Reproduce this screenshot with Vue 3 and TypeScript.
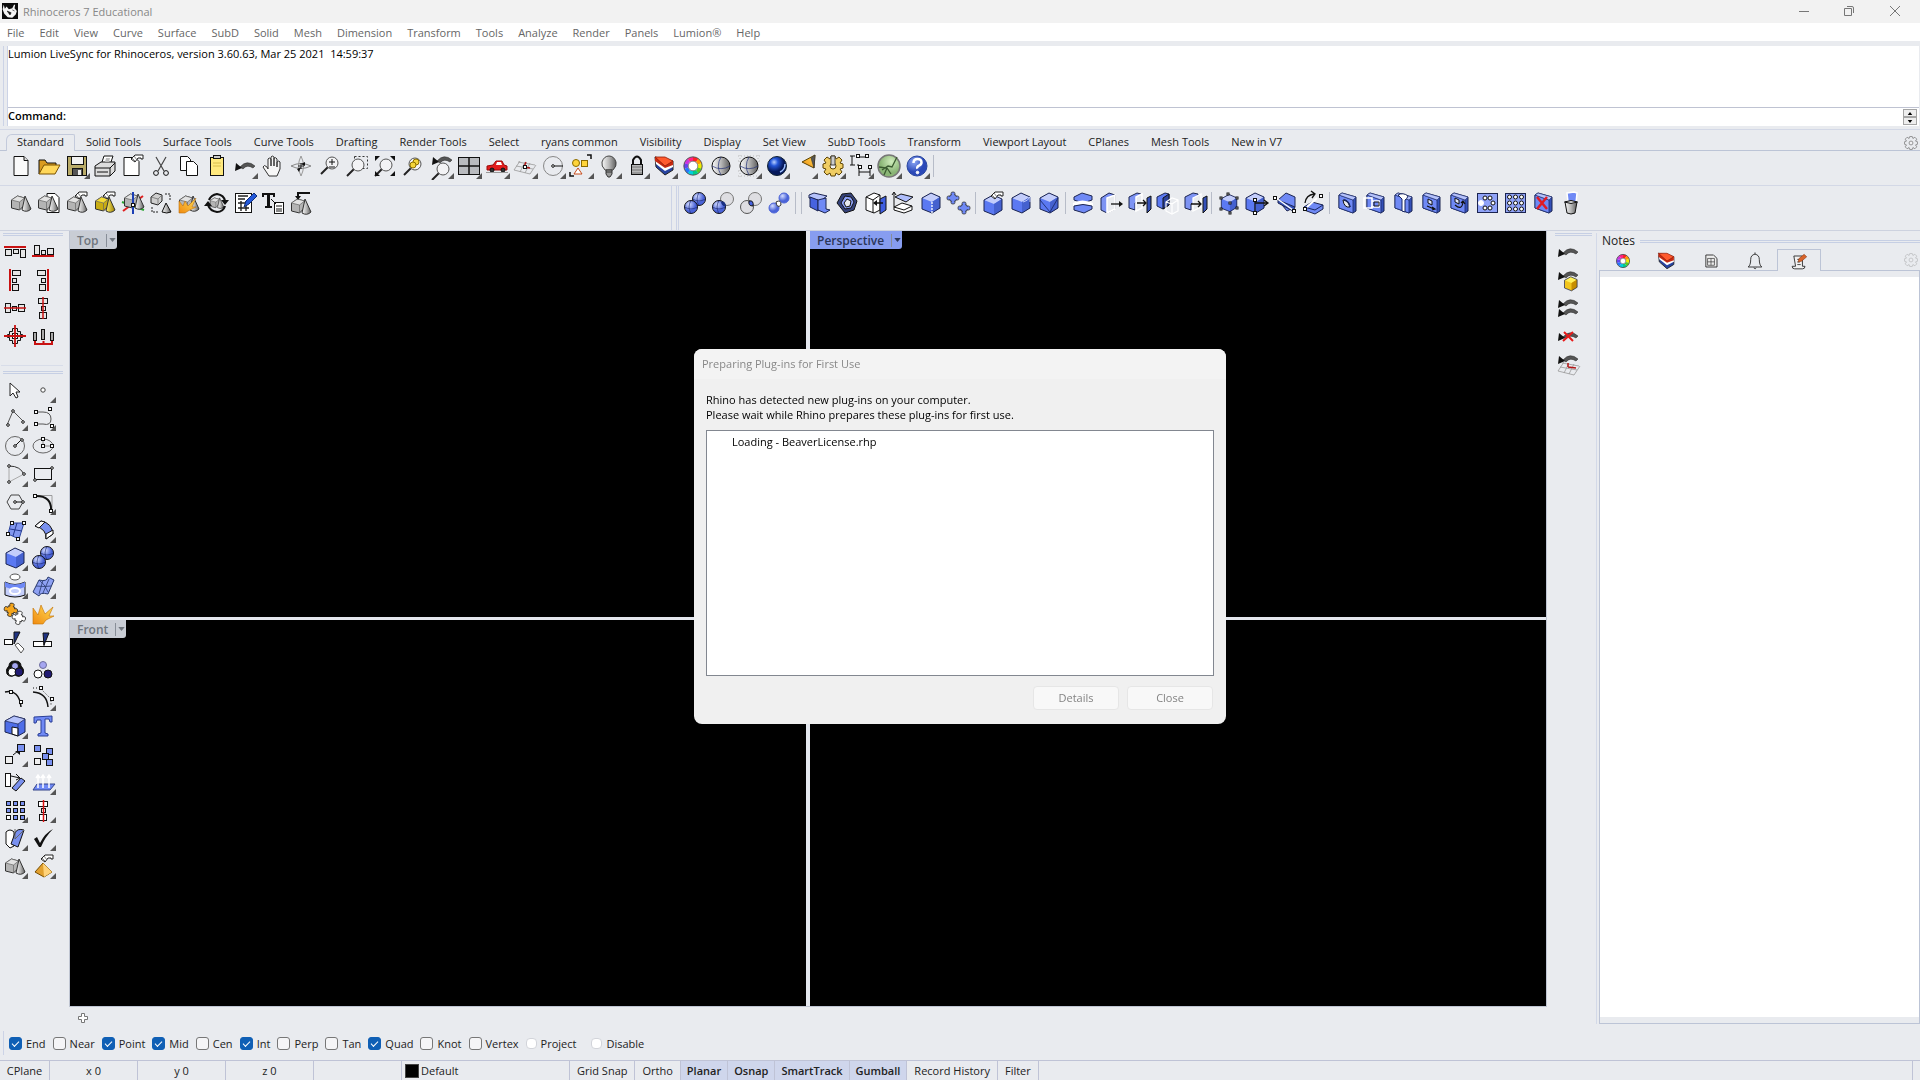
<script setup lang="ts">
import { ref } from 'vue'

const path = (d: string, fill = 'none', stroke = '#111', w = 1) =>
  `<path d="${d}" fill="${fill}" stroke="${stroke}" stroke-width="${w}"/>`
const rect = (x: number, y: number, w: number, h: number, fill = '#fff', stroke = '#111') =>
  `<rect x="${x + 0.5}" y="${y + 0.5}" width="${w - 1}" height="${h - 1}" fill="${fill}" stroke="${stroke}"/>`
const disc = (x: number, y: number, r: number, fill = 'none', stroke = '#111', w = 1) =>
  `<circle cx="${x}" cy="${y}" r="${r}" fill="${fill}" stroke="${stroke}" stroke-width="${w}"/>`
const group = (transform: string, body: string) => `<g transform="${transform}">${body}</g>`
const node = (x: number, y: number) => rect(x - 2, y - 2, 4, 4)
const dot = (x: number, y: number) => disc(x, y, 1.3, '#fff')

const solids = (box = '#b4b4b4', top = '#e2e2e2', cone = 'url(#gray)') =>
  path('M4.500 11l6-4 7 2v7l-5 5-8-2z', box, '#333') +
  path('M4.500 11l6-4 7 2-5 4z', top, '#666', 0.7) +
  path('M12.500 13v8', 'none', '#666', 0.7) +
  path('M18 7l6 13q-4 4-9 1z', cone, '#333')
const cube = (left: string, top: string, right: string) =>
  path('M5 9l9-5 9 4v11l-8 5-10-4z', left, 'none') +
  path('M5 9l9-5 9 4-8 5z', top, 'none') +
  path('M15 13l8-5v11l-8 5z', right, 'none') +
  path('M5 9l9-5 9 4v11l-8 5-10-4z', 'none', '#1b2450')
const blueCube = cube('#5b79f2', '#c3cdfb', '#4561cf')
const slab =
  path('M6 6l3-2 14 4v14l-3 2-14-5z', '#3450b8', '#1b2450') +
  path('M6 6l14 5v13l-14-5z', '#6f89f5', '#1d2c6b', 0.8) +
  path('M6 6l3-2 14 4-3 3z', '#b5c2fb', '#1d2c6b', 0.6)
const hand = path('M12 7l4-4h8v4h-2v-1h-3l-3 4z', '#fff', '#222') + path('M13 6l3 3M15 4l3 4', 'none', '#666', 0.8)
const arc = path('M9 15q7-8 15-1l-2 2q-6-4-10 1z', '#555', '#222', 0.5) + path('M4 19l1-8 6 5z', '#111', 'none')
const lens = (x: number, y: number) =>
  path(`M${x - 4} ${y + 4}l-7 7`, 'none', '#222', 2) + disc(x, y, 6, '#f3f3f5', '#555')
const sphere = (x: number, y: number, r: number, fill = 'url(#blueBall)') =>
  disc(x, y, r, fill) +
  path(`M${x - r} ${y}q${r} ${r * 0.6} ${r * 2} 0M${x} ${y - r}q${-r * 0.6} ${r} 0 ${r * 2}`, 'none', '#22317a', 0.7)
const meshGrid = path('M7 13l17 3M5 17l17 3M3 21l16 4M9 12l-6 9M14 13l-5 10M19 14l-5 10M25 16l-6 9', 'none', '#999', 0.8)
const wheel = (r: number) => {
  const colors = ['#f22', '#f90', '#ee0', '#5c2', '#0c8', '#0cd', '#27f', '#64e', '#c3d', '#f28']
  const step = 360 / colors.length
  const pieces = colors.map((c, i) => {
    const a = ((i * step - 90) * Math.PI) / 180
    const b = (((i + 1) * step - 89) * Math.PI) / 180
    return path(`M${14 + r * Math.cos(a)} ${14 + r * Math.sin(a)}A${r} ${r} 0 0 1 ${14 + r * Math.cos(b)} ${14 + r * Math.sin(b)}`, 'none', c, 4)
  })
  return pieces.join('') + disc(14, 14, r + 2.2, 'none', '#333', 0.8) + disc(14, 14, r - 2.2, '#fff', '#555', 0.7)
}
const layers =
  path('M4 5l1 10 9 8 8-5V9z', '#2743a0', '#222') +
  path('M4 5l1 7 9 7 8-4V9z', '#fff', 'none') +
  path('M4 5v4l10 7 8-3V9z', '#c62a12', 'none') +
  path('M4 5l10 0 8 4-8 5z', '#ff5a2e', '#8d1b08', 0.8)
const puzzle = (fill: string) =>
  path('M8 8h3q-3-6 3-6t3 6h3v3q6-3 6 3t-6 3v3h-3q3 6-3 6t-3-6H8v-3q-6 3-6-3t6-3z', fill, '#222', 1.4)
const gear = (fill: string, stroke: string) =>
  path('M12 4h4l1 3 3-2 3 3-2 3 3 1v4l-3 1 2 3-3 3-3-2-1 3h-4l-1-3-3 2-3-3 2-3-3-1v-4l3-1-2-3 3-3 3 2z', fill, stroke) +
  disc(14, 14, 3, '#f2f2f4', stroke)
const flame = path('M4 24V8l5 7 3-10 4 9 8-7-4 9h5l-8 4-3 4z', 'url(#fire)', '#c26f00', 0.6)

const icons: Record<string, string> = {
  logo: path('M0 0h28v28h-28z', '#0b0b0b', 'none') + path('M3 3l2 7 3-4 4 5 6-2 3-6 2 0-1 6 4 5-2 6-6 6-8-1-6-6-3-8z', '#f5f5f5', 'none') + path('M9 14l7 3-2 4zM18 12l4 2', '#111'),
  newFile: path('M7 4.500h10l4 4v15h-14z', '#fafafa') + path('M17 4.500v4h4', '#ddd'),
  open: path('M4 22V8h6l2 3h9v4', '#d99b20') + path('M4 22l5-9h16l-5 9z', '#ffd75a', '#7a5200'),
  save: rect(4, 4, 20, 20, '#b9ab68') + rect(8, 4, 13, 9, '#f2f2f2') + rect(9, 16, 11, 8, '#555') + rect(15, 18, 3, 5, '#eee', '#eee'),
  print: path('M10 13l3-9h9l-3 9', '#fff') + path('M4 14l6-4h14v9l-5 5h-15z', '#ddd') + path('M4 16h15l5-5M19 16v8M6 20h11', 'none') + path('M15 6l4 0-1 4-4 0', '#bbb', 'none'),
  fileProps: path('M5 5.500h11l4 4v14h-15z', '#fff') + hand,
  cut: path('M9 5l8 14M19 5l-8 14', 'none', '#444', 1.2) + disc(9, 21, 2.4) + disc(19, 21, 2.4),
  copy: path('M5.500 4.500h7l3 3v11h-10z', '#fff') + path('M11.500 9.500h7l4 4v10h-11z', '#fff'),
  paste: rect(7, 5, 14, 19, '#ffe97e') + rect(10, 3, 8, 4, '#ccc') + path('M10 11h8M10 14h8', 'none', '#d8bd4c'),
  undo: arc,
  pan: path('M10 24l-6-9q1-3 4 0l1 2V7q1-2 3 0v7V5q1-2 3 0v9V6q2-1 3 1v8-5q2-2 3 0v7l-3 7z', '#f7f7f7', '#333'),
  rotate: path('M14 4q-5 10 0 20M14 4q5 10 0 20', 'none', '#999') + path('M4 14q10-5 20 0q-10 5-20 0', 'none', '#888') + path('M14 11v6M11 14h6', 'none', '#222') + path('M18 10l-4 2 4 2zM10 17l4-2-2 5z', '#111', 'none'),
  zoomDyn: lens(17, 11) + path('M14 10h6M17 7v6M14 15h6', 'none', '#111'),
  zoomWin: rect(11, 4, 14, 13, 'none', '#333').replace('/>', ' stroke-dasharray="2 2"/>') + lens(15, 13),
  zoomExt: lens(15, 13) + path('M4 9V4h5zM19 4h5v5zM24 19v5h-5zM9 24h-5v-5z', '#111', 'none'),
  zoomSel: lens(16, 12) + disc(17, 10, 3, '#f4d53b', '#8d7000') + disc(14, 13, 3, '#f4d53b', '#8d7000'),
  zoomUndo: group('translate(1 -6)', arc) + lens(16, 17),
  viewports: rect(3, 5, 22, 18, '#b9bbbf') + path('M14 5v18M3 14h22', 'none', '#111', 1.5),
  car: path('M4 14l6-1 3-4h6l2 4 3 1v4h-20z', '#e31d1d', '#9b0808') + path('M14 10h4l1 3h-6z', '#fff', 'none') + disc(9, 18, 2, '#333') + disc(20, 18, 2, '#333') + path('M3 20.5h22', 'none', '#999'),
  cplane: group('translate(0 -3)', meshGrid + path('M13 18l6 1M13 18l2-5', 'none', '#b21515', 1.5) + rect(12, 16, 4, 4)),
  circle: disc(14, 14, 9.5, 'none', '#888') + path('M14 14h10', 'none', '#111') + dot(14, 14),
  select: disc(9, 11, 3.5, '#ffd43a', '#8a6a00') + rect(14, 8, 7, 7, '#ffd43a', '#8a6a00') + path('M11 16l4 6h-8z', '#fff', '#c74b1b') + path('M20 3h4v4M3 20v4h4', 'none', '#111', 1.5),
  bulb: path('M10 18q-4-4-3-8 2-6 7-6t7 6q1 4-3 8z', 'url(#gray)', '#444') + path('M11 18h6v4l-2 3h-2l-2-3zM11 20h6', '#999', '#333'),
  lock: path('M10 13V8q4-7 8 0v5', 'none', '#111', 2) + rect(8, 12, 12, 11, '#b7b7b7') + path('M9 15h10M9 18h10M9 21h10', 'none', '#777'),
  layers,
  wheel: wheel(7),
  wheelSmall: wheel(5.5),
  shade: sphere(14, 14, 9, 'url(#gray)'),
  shadeSel: path('M3 4h23M3 24h20M3 9h23M3 19h20M5 3v22M23 3v17', 'none', '#bbb').replace('/>', ' stroke-dasharray="1 2"/>') + sphere(14, 14, 9, 'url(#gray)'),
  render: disc(14, 14, 9.5, 'url(#deepBall)', '#123') + path('M17 20q5-2 5-8', 'none', '#9fc2ff', 1.5),
  spot: path('M11 10l13-7-1 13z', 'url(#fire)', '#5b4200') + path('M20 6l4-3-1 13z', '#555', '#333', 0.6),
  options: gear('#f0cd63', '#5c4304') + path('M12 4h4v9h-4z', '#ccc', '#444'),
  dims: path('M5 4v9M3 4h5M3 13h5M12 16v8M23 16v8M12 20h11', 'none') + path('M10 5h9M10 13h2', 'none') + node(11, 4) + node(20, 4) + node(13, 15) + node(23, 15),
  hopper: disc(14, 14, 11, 'url(#green)', '#777', 1.5) + path('M7 18l6-4 4 1 5-10M9 23l3-7M4 15l8 1 4 6', 'none', '#3a5a30', 1.3),
  help: disc(14, 14, 10, 'url(#helpBall)', '#29469f') + path('M10.5 11q0-4 4-4t4 3.5q0 2-2.500 3.200t-1.500 3', 'none', '#fff', 2.5) + disc(14.500, 20.500, 1.3, '#fff', '#fff'),

  solids: solids(),
  solidsPage: path('M12 4.500h8l4 4v15h-12z', '#fff') + group('translate(-1 0)', solids()),
  solidsHand: group('translate(0 1)', solids()) + hand,
  solidsGold: group('translate(0 1)', solids('#c9ad13', '#f5dc36', 'url(#gold)')) + hand,
  solidsAxes: path('M4 22L24 7', 'none', '#e02020', 2) + path('M3 13l22 8', 'none', '#26a52f', 2) + group('translate(1 -2)', solids()) + path('M14 3v22', 'none', '#1c3fb5', 2) + node(14, 16),
  solidsSwap: path('M4 8l5-4 6 2v6l-4 4-7-2z', '#cfcfcf', '#222') + path('M4 8l7 2 4-4M11 10v6', 'none', '#666', 0.7) + path('M19 14l5 9q-4 2-9 0z', 'url(#gray)') + path('M5 18v5h6M18 5h5v6', 'none', '#222').replace('/>', ' stroke-dasharray="2 1"/>'),
  solidsFire: solids() + path('M4 24V12l4 5 2-5 3 5 8-8-4 9h4l-8 4-3 2z', 'url(#fire)', '#ba6f13', 0.6),
  solidsCycle: group('translate(4 4) scale(.7)', solids()) + path('M6 11q2-5 8-6 7 1 8 7M22 17q-2 6-8 6-7-1-9-7', 'none', '#111', 2.2) + path('M18 11h8l-4 5zM1 17h8l-4-5z', '#111', 'none'),
  tableEdit: rect(4, 4, 17, 20) + path('M7 7h10M7 10h7M7 14h11M7 19h11M10 12v10M15 12v10', 'none', '#222', 1.4) + path('M13 18l2-6 8-8 3 3-8 8z', '#2459d9', '#102d77'),
  textProps: path('M3 4h13v4h-2V6h-3v11h2v2H6v-2h2V6H5v2H3z', '#111', 'none') + rect(15, 13, 10, 12) + path('M12 10l5 5M17 17h6M17 20h6M17 22h6', 'none'),
  solidsIn: group('translate(0 3)', solids()) + path('M23 4H11v4', 'none', '#111', 2) + path('M8 7h6l-3 4z', '#111', 'none'),

  union: sphere(18, 10, 6.500) + sphere(10, 18, 6.500),
  difference: disc(18, 10, 6.500, '#dedee2', '#777') + sphere(10, 18, 6.500) + path('M12 13q4-2 5 4-4 1-5-4z', '#193083', 'none'),
  intersect: disc(18, 10, 6.500, '#dedee2', '#777') + disc(10, 18, 6.500, '#dedee2', '#555') + path('M12 12q5-1 4 5-5 0-4-5z', '#4763e0'),
  split: disc(19, 9, 5, 'url(#blueBall)', '#4a63d8') + disc(9, 19, 5, 'url(#blueBall)', '#4a63d8') + path('M11 13q5-3 5 3-4 4-5-3z', '#fff', '#333'),
  extrude1: path('M4 6l5-2 13 3-4 3v12l-5-1V11l-9-2z', '#b5c2fb', '#1b2450') + path('M5 8l8 3v11l-8-4z', '#4763e0', '#1b2450') + path('M13 11l8-2v11l4 1-5 3-7-3z', '#6f89f5', '#1b2450'),
  tube: path('M4 14l5-9 9-1 6 8-3 9-9 3z', '#35427a') + path('M8 14l4-7 6 1 3 5-3 6-6 1z', '#8da1f7') + path('M11 14l3-4 4 2-1 5-4 1z', '#e9ebef'),
  extractSrf: path('M5 8l8-4 6 2v15l-6 3-8-3z', '#fff') + path('M5 8l7 3v13M12 11l7-5', 'none') + path('M19 10l6-3v14l-6 4z', '#3f5ee0') + path('M22 14h-7', 'none', '#111', 1.5) + path('M16 11v6l-4-3z', '#111', 'none'),
  extrudeUp: path('M5 18l8-4 10 3v4l-8 3-10-3z', '#fff') + path('M5 18l10 3 8-4', 'none') + path('M6 8l6-3 12 3-7 5z', '#aebdfb') + path('M5 18V4M3 6l2-3 2 3', 'none'),
  boxDash: blueCube + path('M15 13v11', 'none', '#fff', 1.3).replace('/>', ' stroke-dasharray="2 1"/>'),
  puzzleBlue: group('translate(1 2) scale(.5)', puzzle('#6f89f5')) + group('translate(12 12) scale(.5)', puzzle('#6f89f5')),
  boxHand: group('translate(0 2)', blueCube) + hand,
  boxFillet: blueCube + path('M16 13q5-1 7-5v5', 'none', '#c3cdfb'),
  boxChamfer: blueCube + path('M5 11l10 12 8-14', 'none', '#172560', 0.8),
  sliceBox: path('M5 8l8-4 10 3v4q-9 4-18 0z', '#6f89f5', '#1b2450') + path('M4 14q9-5 20 0v3q-11-4-20 0z', '#fff', 'none') + path('M5 17q9-3 18 0v3l-8 4-10-3z', '#6f89f5', '#1b2450'),
  moveFace: path('M4 9l8-5 6 2v14l-8 4-6-3z', '#7d93f3', '#1b2450') + path('M10 9l8-3v14l-8 4z', '#e9ebef', '#fff', 1.5) + path('M14 15h9', 'none', '#111', 1.3) + path('M22 12v6l4-3z', '#111', 'none'),
  moveFace2: path('M4 8l8-4 4 1v5l-6 4v7l-6-2z', '#7d93f3', '#1b2450') + path('M11 8l6-3v14l-6 3z', '#e9ebef', '#fff', 1.5) + path('M12 14h9M18 11l3 3-3 3', 'none', '#111', 1.3) + path('M22 9l4-2v13l-4 4z', '#3450b8'),
  copyFace: path('M4 8l8-4 4 1v11l-6 4-6-3z', '#5b79f2', '#1b2450') + path('M10 9l6-4v11l-6 4z', '#2d429b') + path('M13 13l6-4 6 2v11l-6 3-6-3zM19 14v10M13 13l6 2 6-4', 'none', '#fff', 1.2),
  moveFace3: path('M4 8l8-4 5 1v6l-7 4v6l-6-2z', '#7d93f3', '#1b2450') + path('M12 9l8-4v13l-8 4z', '#e9ebef', '#fff', 1.3) + path('M10 15h10M17 12l3 3-3 3', 'none', '#111', 1.3) + path('M22 9l4-2v13l-4 4z', '#3450b8'),
  boxPts: group('translate(2 2) scale(.86)', blueCube) + [[6, 9], [13, 5], [22, 9], [15, 14], [6, 20], [15, 24], [22, 19]].map(([x, y]) => rect(x - 1.5, y - 1.5, 3, 3)).join(''),
  boxEdge: group('translate(-2 0)', blueCube) + path('M12 12v13M12 14h12M21 11l4 3-4 3', 'none', '#111', 1.3) + node(12, 11) + node(12, 24),
  faceEdge: path('M7 11l8-7 9 4v10l-8 4z', '#6f89f5', '#1b2450') + path('M7 11l17 7-2 4-15-8z', '#3450b8', '#1b2450') + path('M5 9l17 12', 'none', '#fff', 1.5) + node(4, 9) + node(23, 22),
  bend: path('M5 18l8-5 11 3v4l-8 5-11-4z', '#6f89f5', '#1b2450') + path('M5 18l11 3 8-5', 'none', '#172560') + path('M6 14q1-8 9-9M12 2l4 3-3 4', 'none', '#111', 1.3) + path('M8 18l10-9', 'none', '#fff', 2) + node(22, 7) + node(6, 20),
  hole: slab + path('M10 11q5-1 7 7-6 1-7-7z', '#e9ebef') + path('M11 11q5 1 6 7', 'none', '#172560', 1.5),
  holePlace: slab + path('M3 9h8v10h-8zM11 12h7v6h-8', 'none', '#fff', 1.6) + path('M13 13h5v4h-5z', 'none', '#111'),
  holeRevolve: slab + path('M9 6q5-3 10 1-1 3-3 4v12l-3-1V10z', '#fff', '#172560'),
  holeMove: slab + path('M11 10v4l4 2v-4z', '#dfe5fd', '#111') + path('M10 17l7 3M15 18l3 2-3 1', 'none', '#111', 1.2),
  holeTurn: slab + path('M10 9v4l4 2v-4z', '#dfe5fd', '#111') + path('M10 16q7 6 8-3M16 14l2-2 2 3', 'none', '#111', 1.2),
  holePolar: rect(4, 4, 21, 20, '#8fa2f7', '#1b2450') + disc(8, 14, 2.5, '#fff', '#fff') + [[12, 9], [17, 9], [20, 14], [12, 19], [17, 19]].map(([x, y]) => disc(x, y, 2, '#fff')).join(''),
  holeGrid: rect(4, 4, 21, 20, '#8fa2f7', '#1b2450') + [8, 14, 20].flatMap(y => [8, 14, 20].map(x => disc(x + 0.5, y, 2, '#fff'))).join(''),
  holeDelete: slab + path('M8 8l10 12M18 8l-10 12', 'none', '#e01b24', 2.5),
  trash: path('M10 4l7-1 3 1-1 10-8-1z', '#6f89f5', '#fff', 1.5) + path('M8 13h12l-2 11q-4 2-8 0z', 'url(#gray)') + path('M7.500 13q6.500-3 13 0q-6.500 3-13 0z', '#ddd'),

  alignTop: path('M3 9h22', 'none', '#c81212', 2) + rect(4, 11, 7, 7, '#e6e6e6') + rect(12, 11, 6, 5, '#e6e6e6') + rect(19, 11, 6, 9, '#e6e6e6'),
  alignBottom: rect(5, 7, 6, 10, '#e6e6e6') + rect(12, 12, 5, 5, '#e6e6e6') + rect(18, 10, 7, 7, '#e6e6e6') + path('M3 18h22', 'none', '#c81212', 2),
  alignLeft: path('M9 3v22', 'none', '#c81212', 2) + rect(11, 4, 9, 6, '#e6e6e6') + rect(11, 12, 5, 5, '#e6e6e6') + rect(11, 18, 7, 7, '#e6e6e6'),
  alignRight: rect(8, 4, 9, 6, '#e6e6e6') + rect(12, 12, 5, 5, '#e6e6e6') + rect(10, 18, 7, 7, '#e6e6e6') + path('M19 3v22', 'none', '#c81212', 2),
  alignH: rect(4, 9, 6, 10, '#e6e6e6') + rect(11, 12, 5, 5, '#e6e6e6') + rect(17, 10, 7, 8, '#e6e6e6') + path('M3 14h22', 'none', '#c81212', 1.5),
  alignV: rect(9, 4, 10, 6, '#e6e6e6') + rect(12, 12, 5, 5, '#e6e6e6') + rect(10, 18, 8, 7, '#e6e6e6') + path('M14 3v22', 'none', '#c81212', 1.5),
  alignC: path('M11.500 6.500h5v3h3v3h2v3h-2v3h-3v3h-5v-3h-3v-3h-2v-3h2v-3h3z', '#e6e6e6') + rect(11, 11, 6, 6, '#fff') + path('M14 3v22M3 14h22', 'none', '#c81212', 1.8),
  distribute: rect(4, 10, 4, 9, '#aaa') + rect(12, 7, 4, 11, '#aaa') + rect(21, 10, 4, 9, '#aaa') + path('M6 19v3h17v-3M14.500 19v3', 'none', '#c81212', 2),

  pointer: path('M9 7v13l3-3 3 5 2-1-2-5h4z', '#fff', '#222'),
  point: disc(14, 14, 2.2, '#fff', '#444'),
  polyline: path('M6 21l6-14 10 10', 'none', '#555') + dot(7, 21) + dot(12, 7) + dot(22, 18),
  curve: path('M8 8h6q8 0 8 7t-8 5h-7', 'none', '#555') + node(7, 8) + node(21, 5) + node(7, 20) + node(23, 22),
  circle2: disc(14, 14, 9.500, 'none', '#666') + path('M14 14l6-6', 'none') + dot(14, 14) + dot(21, 8),
  ellipse: '<ellipse cx="14" cy="14" rx="10" ry="7" fill="none" stroke="#666"/>' + path('M14 14V7M14 14h9', 'none', '#888') + node(14, 7) + node(14, 14) + node(23, 14),
  arcTool: path('M8 5v17l15-8', 'none', '#aaa') + path('M8 6q12 0 15 9', 'none', '#333') + dot(8, 6) + dot(8, 22) + dot(23, 14),
  rectangle: rect(5, 8, 18, 12, 'none') + dot(23, 8) + dot(6, 20),
  polygon: path('M10 7h8l4 7-4 7h-8l-4-7z', 'none', '#444') + path('M14 14h8', 'none') + dot(14, 14) + dot(22, 14),
  fillet: path('M7 7.500h16v15', 'none', '#888', 0.8) + path('M7 8q16 0 15 15', 'none', '#111', 2) + node(6, 8) + node(22, 23),
  surface: path('M10 7h13l-5 16-11-5z', '#8297ef', '#2c459f') + path('M16 7l-4 13M9 13l12 2', 'none', '#25388d') + node(11, 7) + node(23, 7) + node(7, 18) + node(17, 23),
  bendSurface: path('M6 10l6-5q11 2 12 13l-7 5q1-10-11-13z', '#7990ef') + path('M6 10l6-5 4 1-6 6z', '#fff') + path('M17 23v-5l7-4v4z', '#fff'),
  box: blueCube,
  spheres: sphere(18, 9, 6.500) + sphere(10, 18, 6.500),
  lathe: '<ellipse cx="14" cy="5" rx="5" ry="3" fill="#fff" stroke="#555"/>' + path('M4 10q10 5 20 0v13q-10 4-20 0z', '#c5cffb') + path('M4 10q10 5 20 0v5q-10 4-20 0z', '#6f89f5', 'none') + '<ellipse cx="14" cy="19" rx="5" ry="3" fill="none" stroke="#fff" stroke-width="2"/>',
  meshSrf: path('M4 20l6-12q8 2 9-3l6 3-6 14q-8-2-9 2z', '#8ea1f3', '#28396d') + path('M10 8q6 4 9 12M7 14q9 1 15 0M14 8l-4 14M20 7l-6 14', 'none', '#28396d', 0.8),
  puzzle: group('rotate(12 10 10) translate(2 2) scale(.56)', puzzle('#f5a51b')) + group('rotate(12 18 18) translate(10 10) scale(.56)', puzzle('#fff')),
  explode: flame,
  trim: rect(3, 11, 9, 6) + path('M13 4h6l-6 12z', '#1f3382') + path('M14 17l3-2 6 6-3 4z', '#fff', '#555'),
  splitTool: rect(4, 13, 19, 6) + path('M14 5h6l-5 12z', '#1f3382') + path('M15 13v6', 'none'),
  groupTool: path('M14 5q6 0 6 5 4 3 2 8-4 4-8 1-5 3-8-1-2-5 2-8 0-5 6-5', '#111') + disc(14, 10, 3.500, '#a5a6f0') + disc(11, 16, 4, '#fff') + disc(18, 16, 4, '#211b73'),
  ungroup: disc(14, 9, 3.500, '#a5a6f0', '#6d6d9d') + disc(9, 18, 4, '#fff') + disc(19, 18, 4, '#211b73'),
  editPts: path('M4 8q14-3 16 15', 'none', '#111', 1.5) + node(10, 8) + node(20, 18),
  controlPts: path('M4 8q14 1 15 15', 'none', '#111', 1.500) + path('M4 4h7l11 11v7', 'none', '#111').replace('/>', ' stroke-dasharray="1 2"/>') + node(12, 4) + node(23, 15),
  solidEdit: path('M4 9l9-5 11 3v13l-7 4-13-4z', '#4f6ee8', '#1b2450') + path('M4 9l9-5 11 3-7 5z', '#b5c2fb', '#1b2450', 0.7) + path('M11 15l6 1v8l-6-2z', '#fff') + path('M17 12v12', 'none', '#1b2450', 0.7),
  textTool: path('M5 5l18-1v6l-2 0-1-3h-4v14l3 1v2H9v-2l3-1V8H8l-1 3H5z', '#6f89f5', '#2a3f96'),
  move: rect(4, 16, 8, 8, '#eee') + rect(16, 4, 8, 8, '#7990ef') + path('M12 15l5-4', 'none') + path('M14 11h5v4z', '#111', 'none'),
  copyTool: [[5, 5], [17, 8], [13, 13], [17, 19]].map(([x, y]) => rect(x, y, 7, 7, '#7990ef')).join('') + rect(5, 18, 7, 7, '#eee'),
  rotateTool: rect(4, 5, 6, 14) + path('M11 20l9-10 4 3-9 10z', '#7990ef') + path('M10 8l9 2M15 6l4 4-4 2', 'none'),
  extrudeTool: path('M8 16h18l-5 6h-17z', '#6f89f5', '#35458a') + path('M9 20V8M14 20V8M20 20V8M7 10l2-3 2 3M12 10l2-3 2 3M18 10l2-3 2 3', 'none', '#fff', 1.5),
  array: [5, 12, 19].flatMap(y => [5, 12, 19].map(x => rect(x, y, 5, 5, x === 5 && y === 19 ? '#fff' : '#7990ef'))).join(''),
  alignTool: rect(9, 5, 10, 6) + rect(12, 12, 5, 5) + rect(10, 18, 8, 7) + path('M14.500 4v22', 'none', '#d11', 1.500),
  bendTool: path('M5 8q4-4 8 0v14l-4 2-4-4z', '#fff') + path('M14 9q2-5 9-3l-6 17-7-3z', '#7990ef') + path('M14 5v10l9-9', 'none', '#666'),
  check: path('M5 15l3-2 3 6q5-10 13-14-8 8-12 18h-2z', '#111', 'none'),
  pyramid: path('M6 20l8-9 9 9-8 5z', '#e1a02f', '#774d00') + path('M14 11l1 14 8-5z', '#ffd37a', 'none') + hand,

  undoBox: group('translate(0 -5)', arc) + group('translate(7 8) scale(.7)', cube('#f2c51c', '#fff15a', '#c68e00')),
  undoMulti: group('translate(0 -5)', arc) + group('translate(0 4)', arc),
  undoX: arc + path('M10 10l9 9M19 10l-10 9', 'none', '#e81b1b', 2),
  undoMesh: group('translate(1 0)', meshGrid) + path('M14 17l8 1M14 17v-4', 'none', '#b21515', 1.5) + group('translate(0 -5)', arc),
  pageTab: path('M8 7h9l4 4v10h-13z', '#ededed', '#222') + path('M10 11h8v8h-8zM14 11v8M10 15h8', 'none', '#333', 0.8),
  bell: path('M6 21q3-2 3-9 0-5 5-6 5 1 5 6 0 7 3 9zM12.500 22q2 2 3 0M14 6v-2', 'none', '#222'),
  notes: path('M8 7h10v12h3q0 3-3 3h-9q-3 0-3-3h4z', '#f1f1f1', '#222') + path('M12 11h4M12 14h3M12 17h4', 'none', '#333') + path('M13 14l1-4 6-5 3 3-6 5z', '#d9642b', '#7a2c08', 0.6),
  gearSmall: gear('none', '#666')
}

const flyout = path('M27 21v6h-6z', '#555', 'none')
const draw = (spec: string) => (spec.endsWith('*') ? icons[spec.slice(0, -1)] + flyout : icons[spec])
const words = (s: string) => s.split(' ')
const nameOf = (spec: string) => spec.replace('*', '')

const menus = ['File', 'Edit', 'View', 'Curve', 'Surface', 'SubD', 'Solid', 'Mesh', 'Dimension', 'Transform', 'Tools', 'Analyze', 'Render', 'Panels', 'Lumion®', 'Help']
const tabs = ['Standard', 'Solid Tools', 'Surface Tools', 'Curve Tools', 'Drafting', 'Render Tools', 'Select', 'ryans common', 'Visibility', 'Display', 'Set View', 'SubD Tools', 'Transform', 'Viewport Layout', 'CPlanes', 'Mesh Tools', 'New in V7']
const activeTab = ref('Standard')

const standardTools = words('newFile open save* print fileProps cut copy paste undo* pan rotate zoomDyn zoomWin zoomExt zoomSel zoomUndo* viewports* car* cplane* circle* select* bulb* lock* layers* wheel* shade shadeSel* render* spot* options* dims* hopper* help*')
const blockTools = words('solids solidsPage solidsHand solidsGold solidsAxes solidsSwap solidsFire solidsCycle tableEdit textProps solidsIn')
const booleanTools = words('union difference intersect split')
const solidGroups = [
  words('extrude1 tube extractSrf extrudeUp boxDash puzzleBlue'),
  words('boxHand boxFillet boxChamfer'),
  words('sliceBox moveFace moveFace2 copyFace moveFace3'),
  words('boxPts boxEdge faceEdge bend'),
  words('hole holePlace holeRevolve holeMove holeTurn holePolar holeGrid holeDelete trash')
]
const alignTools = words('alignTop alignBottom alignLeft alignRight alignH alignV alignC distribute')
const mainTools = words('pointer point* polyline* curve* circle2* ellipse* arcTool* rectangle* polygon* fillet* surface* bendSurface* box* spheres* lathe* meshSrf* puzzle explode trim splitTool groupTool* ungroup editPts controlPts* solidEdit* textTool move* copyTool rotateTool extrudeTool* array* alignTool* bendTool* check* solids* pyramid*')
const undoTools = words('undo undoBox undoMulti undoX undoMesh')
const panelTabs = words('wheelSmall layers pageTab bell notes')

const viewports = [
  { name: 'Top', active: false, labelled: true },
  { name: 'Perspective', active: true, labelled: true },
  { name: 'Front', active: false, labelled: true },
  { name: 'Right', active: false, labelled: false }
]

const snaps = ref([
  { label: 'End', on: true }, { label: 'Near', on: false }, { label: 'Point', on: true },
  { label: 'Mid', on: true }, { label: 'Cen', on: false }, { label: 'Int', on: true },
  { label: 'Perp', on: false }, { label: 'Tan', on: false }, { label: 'Quad', on: true },
  { label: 'Knot', on: false }, { label: 'Vertex', on: false }
])
const modes = ref([{ label: 'Project', on: false }, { label: 'Disable', on: false }])
const toggles = [
  { label: 'Grid Snap', on: false }, { label: 'Ortho', on: false }, { label: 'Planar', on: true },
  { label: 'Osnap', on: true }, { label: 'SmartTrack', on: true }, { label: 'Gumball', on: true },
  { label: 'Record History', on: false }, { label: 'Filter', on: false }
]
const command = ref('')
</script>

<template>
  <div class="app">
    <svg class="defs" width="0" height="0" aria-hidden="true">
      <defs>
        <linearGradient id="gray"><stop offset="0" stop-color="#fafafa" /><stop offset=".5" stop-color="#b8b8b8" /><stop offset="1" stop-color="#5c5c5c" /></linearGradient>
        <linearGradient id="gold"><stop offset="0" stop-color="#fff16b" /><stop offset="1" stop-color="#9b7c00" /></linearGradient>
        <linearGradient id="fire" x1="0" y1="1" x2="1" y2="0"><stop offset="0" stop-color="#f08a10" /><stop offset="1" stop-color="#ffdd55" /></linearGradient>
        <radialGradient id="blueBall" cx=".35" cy=".3"><stop offset="0" stop-color="#d3dcff" /><stop offset="1" stop-color="#4a63d8" /></radialGradient>
        <radialGradient id="deepBall" cx=".35" cy=".3"><stop offset="0" stop-color="#b8d0ff" /><stop offset=".4" stop-color="#2456d8" /><stop offset="1" stop-color="#06195c" /></radialGradient>
        <radialGradient id="helpBall" cx=".35" cy=".3"><stop offset="0" stop-color="#8ea8f5" /><stop offset="1" stop-color="#2a48b8" /></radialGradient>
        <radialGradient id="green" cx=".6" cy=".3"><stop offset="0" stop-color="#cfecbc" /><stop offset="1" stop-color="#8ab576" /></radialGradient>
      </defs>
    </svg>

    <header class="titlebar">
      <svg class="logo" viewBox="0 0 28 28" v-html="icons.logo"></svg>
      <h1>Rhinoceros 7 Educational</h1>
      <div class="window-buttons">
        <button aria-label="Minimize"><svg viewBox="0 0 12 12"><path d="M1 6.500h10" /></svg></button>
        <button aria-label="Restore"><svg viewBox="0 0 12 12"><path d="M1.500 3.500h7v7h-7zM4 1.500h5q1.500 0 1.500 1.500v5" /></svg></button>
        <button aria-label="Close window"><svg viewBox="0 0 12 12"><path d="M1 1l10 10M11 1L1 11" /></svg></button>
      </div>
    </header>

    <nav class="menubar"><a v-for="m in menus" :key="m" href="#">{{ m }}</a></nav>

    <section class="command">
      <div class="history">Lumion LiveSync for Rhinoceros, version 3.60.63, Mar 25 2021&nbsp; 14:59:37</div>
      <div class="prompt">
        <label for="cmd">Command:</label>
        <input id="cmd" v-model="command" type="text" autocomplete="off" />
        <div class="spin">
          <button aria-label="Scroll up"><svg viewBox="0 0 8 4"><path d="M1 4h6L4 0z" /></svg></button>
          <button aria-label="Scroll down"><svg viewBox="0 0 8 4"><path d="M1 0h6L4 4z" /></svg></button>
        </div>
      </div>
    </section>

    <section class="ribbon">
      <div class="tabs">
        <button v-for="t in tabs" :key="t" :class="{ active: t === activeTab }" @click="activeTab = t">{{ t }}</button>
        <button class="tab-options" aria-label="Toolbar options"><svg viewBox="0 0 28 28" v-html="draw('gearSmall')"></svg></button>
      </div>
      <div class="row standard">
        <button v-for="i in standardTools" :key="i" class="tool" :aria-label="nameOf(i)"><svg viewBox="0 0 28 28" v-html="draw(i)"></svg></button>
        <span class="sep"></span>
      </div>
    </section>

    <section class="row second">
      <div class="band blocks">
        <button v-for="i in blockTools" :key="i" class="tool" :aria-label="i"><svg viewBox="0 0 28 28" v-html="draw(i)"></svg></button>
      </div>
      <div class="band solid">
        <button v-for="i in booleanTools" :key="i" class="tool" :aria-label="i"><svg viewBox="0 0 28 28" v-html="draw(i)"></svg></button>
        <span class="sep"></span>
        <template v-for="(g, n) in solidGroups" :key="n">
          <span class="sep"></span>
          <button v-for="i in g" :key="i" class="tool" :aria-label="i"><svg viewBox="0 0 28 28" v-html="draw(i)"></svg></button>
        </template>
      </div>
    </section>

    <main>
      <aside class="left">
        <div class="grip"></div>
        <div class="palette aligns">
          <button v-for="i in alignTools" :key="i" class="tool" :aria-label="i"><svg viewBox="0 0 28 28" v-html="draw(i)"></svg></button>
        </div>
        <div class="grip second-grip"></div>
        <div class="palette">
          <button v-for="i in mainTools" :key="i" class="tool" :aria-label="nameOf(i)"><svg viewBox="0 0 28 28" v-html="draw(i)"></svg></button>
        </div>
      </aside>

      <div class="views">
        <section v-for="v in viewports" :key="v.name" class="viewport" :aria-label="v.name">
          <div v-if="v.labelled" class="view-title" :class="{ active: v.active }">
            <span>{{ v.name }}</span>
            <button :aria-label="v.name + ' menu'"><svg viewBox="0 0 8 5"><path d="M0 0h8L4 5z" /></svg></button>
          </div>
        </section>
      </div>

      <aside class="undo-bar">
        <div class="grip"></div>
        <button v-for="i in undoTools" :key="i" class="tool" :aria-label="i"><svg viewBox="0 0 28 28" v-html="draw(i)"></svg></button>
      </aside>

      <aside class="panel">
        <div class="panel-head"><h2>Notes</h2><div class="grip"></div></div>
        <div class="panel-tabs">
          <button v-for="i in panelTabs" :key="i" :class="{ active: i === 'notes' }" :aria-label="i"><svg viewBox="0 0 28 28" v-html="draw(i)"></svg></button>
          <button class="panel-options" aria-label="Panel options"><svg viewBox="0 0 28 28" v-html="draw('gearSmall')"></svg></button>
        </div>
        <div class="panel-body"><textarea aria-label="Notes"></textarea></div>
      </aside>
    </main>

    <div class="add-view">
      <button aria-label="New layout"><svg viewBox="0 0 10 10"><path d="M3.500 .500h3v3h3v3h-3v3h-3v-3h-3v-3h3z" /></svg></button>
    </div>

    <section class="osnap">
      <label v-for="s in snaps" :key="s.label"><input v-model="s.on" type="checkbox" />{{ s.label }}</label>
      <label v-for="s in modes" :key="s.label" class="mode"><input v-model="s.on" type="checkbox" />{{ s.label }}</label>
    </section>

    <footer class="status">
      <span class="cplane">CPlane</span>
      <span class="coord">x 0</span>
      <span class="coord">y 0</span>
      <span class="coord">z 0</span>
      <span class="coord"></span>
      <span class="layer"><i></i>Default</span>
      <button v-for="t in toggles" :key="t.label" :class="{ on: t.on }">{{ t.label }}</button>
      <span class="fill"></span>
    </footer>

    <div class="overlay">
      <div class="dialog" role="dialog" aria-labelledby="dlg-title">
        <h2 id="dlg-title">Preparing Plug-ins for First Use</h2>
        <div class="dialog-body">
          <p>Rhino has detected new plug-ins on your computer.<br />Please wait while Rhino prepares these plug-ins for first use.</p>
          <ul><li>Loading - BeaverLicense.rhp</li></ul>
          <div class="actions">
            <button disabled>Details</button>
            <button disabled>Close</button>
          </div>
        </div>
      </div>
    </div>
  </div>
</template>

<style>
body { margin: 0; }
</style>

<style scoped>
* { box-sizing: border-box; }
.app {
  display: flex; flex-direction: column; min-height: 100vh;
  background: #e9ebef; color: #222;
  font: 11px/15px "Open Sans", "Noto Sans", sans-serif;
}
button { margin: 0; padding: 0; border: 0; background: none; color: inherit; font: inherit; }
h1, h2, p, ul { margin: 0; padding: 0; font: inherit; }
svg { display: block; }
.defs { position: absolute; }

.titlebar { display: flex; align-items: center; height: 23px; padding: 0 1px 1px 2px; background: #f2f2f2; color: #888; }
.logo { width: 16px; height: 16px; margin-right: 5px; }
.window-buttons { display: flex; margin-left: auto; }
.window-buttons button { display: grid; place-items: center; width: 45px; height: 20px; }
.window-buttons button:last-child { width: 48px; }
.window-buttons svg { width: 12px; height: 12px; fill: none; stroke: #777; }

.menubar { display: flex; gap: 15px; height: 18px; padding-left: 7px; align-items: center; background: #fff; }
.menubar a { color: #666; text-decoration: none; }

.command { margin: 5px 1px 3px 3px; padding-left: 4px; background: #fff; border-left: 1px solid #ccd3e6; box-shadow: inset 3px 0 #e9ebef, inset 4px 0 #ccd3e6; color: #000; }
.history { height: 62px; border-bottom: 1px solid #bfc3d2; }
.prompt { display: flex; align-items: center; height: 18px; }
.prompt label { font-weight: 600; padding-bottom: 3px; }
.prompt input { flex: 1; min-width: 0; height: 17px; border: 0; outline: 0; padding: 0 4px; font: inherit; }
.spin { display: flex; flex-direction: column; width: 14px; margin-right: 2px; }
.spin button { display: grid; place-items: center; height: 8px; border: 1px solid #a5a5a5; background: #eee; }
.spin svg { width: 6px; height: 3px; }

.ribbon { border-top: 1px solid #d3d8e6; border-bottom: 1px solid #d3d8e6; padding-top: 4px; }
.tabs { display: flex; height: 17px; padding-left: 6px; border-bottom: 1px solid #bcc4d6; }
.tabs button { height: 16px; padding: 0 11px; line-height: 16px; white-space: nowrap; }
.tabs button.active { height: 17px; border: 1px solid #c3cadb; border-bottom: 0; border-radius: 6px 2px 0 0; background: #e9ebef; padding: 0 10px 2px; line-height: 14px; }
.tabs .tab-options { margin-left: auto; padding: 0; }
.tab-options svg { width: 18px; height: 18px; }

.row { display: flex; }
.standard { height: 34px; padding: 1px 0 0 7px; }
.tool { width: 28px; height: 28px; flex: none; }
.tool svg { width: 28px; height: 28px; }
.sep { flex: none; width: 6px; height: 22px; margin-top: 3px; background: linear-gradient(90deg, transparent 2px, #b7bcc8 2px, #b7bcc8 3px, transparent 3px); }
.second { height: 45px; border-bottom: 1px solid #cdd2df; }
.band { display: flex; padding-top: 3px; }
.blocks { flex: 0 0 35%; padding-left: 7px; border-right: 1px solid #ccd3e6; }
.solid { margin-left: 4px; padding-left: 4px; border-left: 1px solid #ccd3e6; box-shadow: inset 1px 0 #e9ebef, inset 2px 0 #ccd3e6; }

main { display: flex; flex: 1; }
.grip { height: 3px; border-top: 1px solid #c6cfe4; border-bottom: 1px solid #c6cfe4; }
.left { flex: none; width: 69px; padding: 2px 6px 0 1px; }
.left .grip { margin: 0 0 0 2px; }
.palette { display: flex; flex-wrap: wrap; align-content: flex-start; padding-top: 2px; }
.aligns { height: 130px; border-bottom: 1px solid #d8dde9; }
.left .second-grip { margin-top: 5px; }

.views { flex: 1; display: grid; grid-template: 1fr 1fr / 1fr 1fr; gap: 3px 4px; border: 1px solid #bfc5d2; border-width: 0 1px 1px; background: #e4e7ee; }
.viewport { background: #000; min-height: 380px; }
.view-title { display: inline-flex; align-items: center; height: 18px; padding-left: 7px; background: #c9cdd5; border-bottom-right-radius: 3px; color: #6f757d; font-size: 12px; font-weight: 600; vertical-align: top; }
.view-title button { width: 11px; height: 13px; margin-left: 7px; padding-left: 2px; border-left: 1px solid #888e98; }
.view-title svg { width: 7px; height: 4px; fill: #6f757d; }
.view-title.active { background: #879df0; color: #2b3658; }
.view-title.active svg { fill: #2b3658; }

.undo-bar { flex: none; width: 49px; padding-top: 2px; }
.undo-bar .grip { margin: 0 4px 2px 8px; }
.undo-bar .tool { display: block; margin-left: 7px; }

.panel { flex: none; width: 324px; display: flex; flex-direction: column; margin: 2px 0 -17px; padding-left: 2px; border-left: 1px solid #d3d9e8; }
.panel-head { display: flex; align-items: center; gap: 5px; height: 16px; padding-left: 3px; font-size: 12px; }
.panel-head h2 { line-height: 14px; }
.panel-head .grip { flex: 1; }
.panel-tabs { display: flex; height: 22px; padding-left: 2px; }
.panel-tabs button { display: grid; place-items: center; width: 44px; height: 22px; }
.panel-tabs .active { border: 1px solid #bcc4d6; border-bottom: 0; background: #e9ebef; position: relative; z-index: 1; }
.panel-tabs svg { width: 24px; height: 24px; }
.panel-tabs .panel-options { width: 18px; margin-left: auto; opacity: .4; }
.panel-tabs .panel-options svg { width: 18px; height: 18px; }
.panel-body { flex: 1; display: flex; margin-top: -1px; padding: 6px 0; border: 1px solid #bcc4d6; }
textarea { flex: 1; width: 100%; border: 0; outline: 0; resize: none; background: #fff; font: inherit; }

.add-view { height: 24px; padding: 6px 0 0 78px; }
.add-view button { display: block; }
.add-view svg { width: 10px; height: 10px; fill: #fff; stroke: #777; }

.osnap { display: flex; align-items: center; gap: 7px; height: 24px; margin: 0 0 5px 3px; padding-left: 5px; border-left: 1px solid #ccd3e6; width: max-content; }
.osnap label { display: flex; align-items: center; gap: 4px; }
.osnap input { appearance: none; width: 13px; height: 13px; margin: 0; border: 1px solid #777; border-radius: 3px; background: #f5f5f7; }
.osnap input:checked { border-color: #0f5fb5; background: #0f5fb5; }
.osnap input:checked::after { content: ""; display: block; width: 6px; height: 3px; margin: 3px 0 0 2px; border: solid #fff; border-width: 0 0 1px 1px; transform: rotate(-45deg); }
.osnap .mode input { width: 11px; height: 11px; border-color: #d2d4da; background: #fff; border-radius: 4px; }
.osnap .mode { margin-right: 8px; }

.status { display: flex; height: 20px; border-top: 1px solid #bfc3d6; }
.status > * { display: flex; align-items: center; justify-content: center; border-right: 1px solid #bfc3d6; white-space: nowrap; }
.cplane { width: 50px; }
.coord { width: 88px; }
.status .layer { width: 168px; justify-content: flex-start; gap: 2px; padding-left: 3px; }
.layer i { width: 14px; height: 14px; background: #000; border: 1px solid #444; }
.status button { padding: 0 7px; }
.status .on { padding: 0 6px; background: #cfd6ec; font-weight: 600; }
.status .fill { flex: 1; margin-right: 7px; }

.overlay { position: fixed; inset: 0; display: grid; place-items: center; padding-bottom: 7px; }
.dialog { width: 532px; border-radius: 8px; overflow: hidden; background: #f0f0f0; color: #000; }
.dialog h2 { height: 30px; padding: 0 8px; line-height: 30px; background: #f3f3f3; color: #888; }
.dialog-body { padding: 13px 12px 14px; }
.dialog ul { height: 246px; margin-top: 8px; padding: 3px 25px; border: 1px solid #828790; background: #fff; list-style: none; }
.actions { display: flex; justify-content: flex-end; gap: 8px; margin-top: 10px; padding-right: 1px; }
.actions button { width: 86px; height: 24px; padding-bottom: 2px; border: 1px solid #e6e6e6; border-radius: 4px; background: #f8f8f8; color: #838383; }
</style>
